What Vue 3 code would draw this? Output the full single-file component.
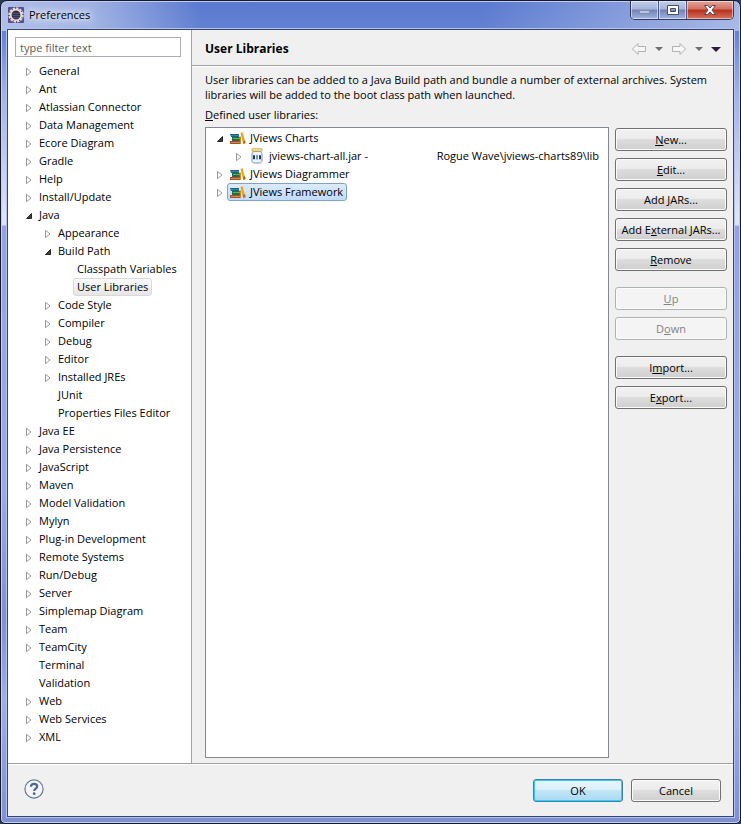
<script setup>
import { ref } from 'vue'

const filter = ref('')

const categories = [
  { name: 'General', level: 0, state: 'closed' },
  { name: 'Ant', level: 0, state: 'closed' },
  { name: 'Atlassian Connector', level: 0, state: 'closed' },
  { name: 'Data Management', level: 0, state: 'closed' },
  { name: 'Ecore Diagram', level: 0, state: 'closed' },
  { name: 'Gradle', level: 0, state: 'closed' },
  { name: 'Help', level: 0, state: 'closed' },
  { name: 'Install/Update', level: 0, state: 'closed' },
  { name: 'Java', level: 0, state: 'open' },
  { name: 'Appearance', level: 1, state: 'closed' },
  { name: 'Build Path', level: 1, state: 'open' },
  { name: 'Classpath Variables', level: 2, state: 'leaf' },
  { name: 'User Libraries', level: 2, state: 'leaf', selected: true },
  { name: 'Code Style', level: 1, state: 'closed' },
  { name: 'Compiler', level: 1, state: 'closed' },
  { name: 'Debug', level: 1, state: 'closed' },
  { name: 'Editor', level: 1, state: 'closed' },
  { name: 'Installed JREs', level: 1, state: 'closed' },
  { name: 'JUnit', level: 1, state: 'leaf' },
  { name: 'Properties Files Editor', level: 1, state: 'leaf' },
  { name: 'Java EE', level: 0, state: 'closed' },
  { name: 'Java Persistence', level: 0, state: 'closed' },
  { name: 'JavaScript', level: 0, state: 'closed' },
  { name: 'Maven', level: 0, state: 'closed' },
  { name: 'Model Validation', level: 0, state: 'closed' },
  { name: 'Mylyn', level: 0, state: 'closed' },
  { name: 'Plug-in Development', level: 0, state: 'closed' },
  { name: 'Remote Systems', level: 0, state: 'closed' },
  { name: 'Run/Debug', level: 0, state: 'closed' },
  { name: 'Server', level: 0, state: 'closed' },
  { name: 'Simplemap Diagram', level: 0, state: 'closed' },
  { name: 'Team', level: 0, state: 'closed' },
  { name: 'TeamCity', level: 0, state: 'closed' },
  { name: 'Terminal', level: 0, state: 'leaf' },
  { name: 'Validation', level: 0, state: 'leaf' },
  { name: 'Web', level: 0, state: 'closed' },
  { name: 'Web Services', level: 0, state: 'closed' },
  { name: 'XML', level: 0, state: 'closed' },
]

const libraries = [
  { name: 'JViews Charts', level: 0, state: 'open', icon: 'books' },
  { name: 'jviews-chart-all.jar -', path: 'Rogue Wave\\jviews-charts89\\lib', level: 1, state: 'closed', icon: 'jar' },
  { name: 'JViews Diagrammer', level: 0, state: 'closed', icon: 'books' },
  { name: 'JViews Framework', level: 0, state: 'closed', icon: 'books', selected: true },
]

// Each label is split around its mnemonic letter.
const actionGroups = [
  [
    ['', 'N', 'ew...'],
    ['', 'E', 'dit...'],
    ['Add ', 'J', 'ARs...'],
    ['Add E', 'x', 'ternal JARs...'],
    ['', 'R', 'emove'],
  ],
  [
    ['', 'U', 'p', true],
    ['D', 'o', 'wn', true],
  ],
  [
    ['I', 'm', 'port...'],
    ['E', 'x', 'port...'],
  ],
]
</script>

<template>
  <div class="window">
    <header class="titlebar">
      <svg class="app-icon" viewBox="0 0 16 16" aria-hidden="true">
        <rect width="16" height="16" rx="1" fill="#5a4c8c" />
        <circle cx="8" cy="8" r="6.6" fill="none" stroke="#dedbd4" stroke-width="2.2" stroke-dasharray="2.3 1.15" />
        <circle cx="8" cy="8" r="5.3" fill="#352e4c" stroke="#e6e3dd" stroke-width="1.7" />
        <path d="M4.5 6.5h7M4.2 8.5h7.6M5 10.5h6" stroke="#574f70" stroke-width="1" />
      </svg>
      <h1 class="title">Preferences</h1>
      <div class="caption">
        <button class="cap" type="button" aria-label="Minimize">
          <svg viewBox="0 0 14 12"><rect x="1.5" y="6.5" width="10" height="3" fill="#b9c4de" stroke="#8290b4" /></svg>
        </button>
        <button class="cap" type="button" aria-label="Maximize">
          <svg viewBox="0 0 14 12"><path d="M1.5 1.5h11v9h-11zM4.5 4.5v3h5v-3z" fill="#fff" fill-rule="evenodd" stroke="#46506e" /></svg>
        </button>
        <button class="cap close" type="button" aria-label="Close">
          <svg viewBox="0 0 14 12"><path d="M1.5 1.5h3.2L7 4l2.3-2.5h3.2L9 6l3.5 4.5H9.3L7 8l-2.3 2.5H1.5L5 6z" fill="#fff" stroke="#5a4450" /></svg>
        </button>
      </div>
    </header>

    <div class="client">
      <div class="content">
        <nav class="sidebar">
          <input v-model="filter" class="filter" type="text" placeholder="type filter text" aria-label="Filter preferences" />
          <ul class="tree">
            <li v-for="item in categories" :key="item.name" class="row" :class="'level-' + item.level">
              <span class="twisty">
                <svg v-if="item.state === 'closed'" viewBox="0 0 8 10"><path d="M1.5 1.3v7.4L6 5z" fill="#fff" stroke="#989898" /></svg>
                <svg v-else-if="item.state === 'open'" viewBox="0 0 8 10"><path d="M6.5 2.5v5h-5z" fill="#404040" stroke="#262626" stroke-linejoin="round" /></svg>
              </span>
              <span class="label" :class="{ current: item.selected }">{{ item.name }}</span>
            </li>
          </ul>
        </nav>

        <main class="page">
          <div class="page-head">
            <h2 class="page-title">User Libraries</h2>
            <div class="history">
              <button class="tool" type="button" aria-label="Back" disabled>
                <svg width="16" height="14" viewBox="0 0 16 14"><path d="M1.5 7l5.5-5.5v3h7.500v5H7v3z" fill="#f7f7f7" stroke="#b0b0b0" stroke-linejoin="round" /></svg>
              </button>
              <button class="tool" type="button" aria-label="Back history">
                <svg width="8" height="14" viewBox="0 0 8 14"><path d="M0 5h8L4 9z" fill="#6e6e6e" /></svg>
              </button>
              <button class="tool" type="button" aria-label="Forward" disabled>
                <svg width="16" height="14" viewBox="0 0 16 14"><path d="M14.5 7L9 1.500v3H1.500v5H9v3z" fill="#f7f7f7" stroke="#b0b0b0" stroke-linejoin="round" /></svg>
              </button>
              <button class="tool" type="button" aria-label="Forward history">
                <svg width="8" height="14" viewBox="0 0 8 14"><path d="M0 5h8L4 9z" fill="#6e6e6e" /></svg>
              </button>
              <button class="tool" type="button" aria-label="View menu">
                <svg width="10" height="14" viewBox="0 0 10 14"><path d="M0 5h10L5 10z" fill="#2c1a40" /></svg>
              </button>
            </div>
          </div>

          <div class="page-body">
            <p class="intro">User libraries can be added to a Java Build path and bundle a number of external archives. System libraries will be added to the boot class path when launched.</p>
            <p id="defined-label" class="list-label"><u>D</u>efined user libraries:</p>
            <div class="columns">
              <ul class="library-list" aria-labelledby="defined-label">
                <li v-for="lib in libraries" :key="lib.name" class="row" :class="'level-' + lib.level">
                  <span class="twisty">
                    <svg v-if="lib.state === 'closed'" viewBox="0 0 8 10"><path d="M1.5 1.3v7.4L6 5z" fill="#fff" stroke="#989898" /></svg>
                    <svg v-else viewBox="0 0 8 10"><path d="M6.5 2.5v5h-5z" fill="#404040" stroke="#262626" stroke-linejoin="round" /></svg>
                  </span>
                  <span class="library" :class="{ picked: lib.selected }">
                    <svg v-if="lib.icon === 'books'" class="lib-icon" viewBox="0 0 16 16" aria-hidden="true">
                      <path d="M0 4h9v3H1z" fill="#1b6488" /><path d="M1 5h8v1H1z" fill="#2f86a4" />
                      <path d="M2 7h8v4H2z" fill="#1c7048" /><path d="M3 8h7v1H3z" fill="#58ad7c" />
                      <path d="M0 11h11v3H0z" fill="#a9502a" /><path d="M1 12h9v1H1z" fill="#d98255" />
                      <path d="M9.500 6.500h1.500V14H10z" fill="#d98a14" />
                      <path d="M10.500 3l2-1L15.500 13l-2.200 1z" fill="#eda41d" />
                      <path d="M12.800 11l2.200-.8.600 2.800-2.200 1z" fill="#b56f10" />
                    </svg>
                    <svg v-else class="lib-icon" viewBox="0 0 16 16" aria-hidden="true">
                      <path d="M4.500 3.500h7l1.500 2v8l-1.500 1.500h-7L3 13.500v-8z" fill="#eef3fa" stroke="#7893b8" />
                      <path d="M3 .8h10v2.400H3z" fill="#fbe8a8" stroke="#c8a040" stroke-width=".8" />
                      <path d="M4.500 7.500h1v3.500h-1zM8 7v4.500M10.500 7.500h1v3.500h-1z" fill="#fff" stroke="#1f3864" />
                    </svg>
                    <span>{{ lib.name }}</span>
                  </span>
                  <span v-if="lib.path" class="path">{{ lib.path }}</span>
                </li>
              </ul>
              <div class="actions">
                <div v-for="(group, index) in actionGroups" :key="index" class="group">
                  <button v-for="a in group" :key="a.join('')" class="btn" type="button" :disabled="a[3]">{{ a[0] }}<u>{{ a[1] }}</u>{{ a[2] }}</button>
                </div>
              </div>
            </div>
          </div>
        </main>
      </div>

      <footer class="footer">
        <button class="help" type="button" aria-label="Help">
          <svg viewBox="0 0 22 22"><circle cx="11" cy="11" r="10" fill="#f3f5f8" stroke="#64779a" stroke-width="1.3" /><path d="M7.600 8.400C7.600 6.300 9 5.300 11 5.300s3.500 1.100 3.500 2.900c0 2.400-3.300 2.500-3.300 5.100" fill="none" stroke="#50668f" stroke-width="2.400" /><circle cx="11.200" cy="16.200" r="1.500" fill="#50668f" /></svg>
        </button>
        <div class="decision">
          <button class="btn default" type="button">OK</button>
          <button class="btn" type="button">Cancel</button>
        </div>
      </footer>
    </div>
  </div>
</template>

<style>
body {
  margin: 0;
  background: #2b3a55;
}
</style>

<style scoped>
.window,
.window * {
  box-sizing: border-box;
}
.window {
  display: flex;
  flex-direction: column;
  min-height: 100vh;
  padding: 0 6px 6px;
  border: 1px solid #16182c;
  border-radius: 7px 7px 5px 5px;
  box-shadow: inset 0 0 0 1px #c3cdf2;
  background:
    linear-gradient(90deg, rgba(255, 255, 255, 0.5) 0, rgba(255, 255, 255, 0.42) 90px, rgba(255, 255, 255, 0) 200px, rgba(255, 255, 255, 0) 480px, rgba(255, 255, 255, 0.45) 100%) top / 100% 30px no-repeat,
    linear-gradient(#5a79d0 0, #6482d2 30px, #9fb2e6 90px, #dde3f8 215px, #dde3f8 224px, #96a3e2 225px, #9ba9e6 60%, #8090d2 75%, #a0aee8 85%, #7f90d2 100%);
  color: #000;
  font: 11px/18px "Open Sans", "Noto Sans", sans-serif;
}
.window button,
.window input {
  font: inherit;
}
.titlebar {
  display: flex;
  align-items: flex-start;
  height: 28px;
}
.app-icon {
  width: 16px;
  height: 16px;
  margin: 6px 0 0 1px;
}
.title {
  margin: 5px auto 0 5px;
  font: inherit;
  text-shadow: 0 0 6px #fff, 0 0 10px #fff, 0 0 12px #fff;
}
.caption {
  display: flex;
  height: 19px;
  border: 1px solid #2f3a60;
  border-top: 0;
  border-radius: 0 0 5px 5px;
  overflow: hidden;
}
.cap {
  display: flex;
  align-items: center;
  justify-content: center;
  width: 28px;
  padding: 0;
  border: 0;
  border-right: 1px solid #4b588a;
  box-shadow: inset 0 0 0 1px rgba(255, 255, 255, 0.5);
  background: linear-gradient(#c2cdea, #a6b3da 45%, #7081b4 50%, #a3b4e2);
}
.cap svg {
  width: 14px;
  height: 12px;
}
.cap.close {
  width: 46px;
  border-right: 0;
  background: linear-gradient(#e6a49a, #d2705f 45%, #b5301d 50%, #d8735c);
}
.client {
  display: flex;
  flex: 1;
  flex-direction: column;
  border: 1px solid #39466b;
  outline: 1px solid #b4c1ee;
  background: #f0f0f0;
}
.content {
  display: flex;
  flex: 1;
  border-bottom: 1px solid #a0a0a0;
}
.sidebar {
  flex: none;
  width: 184px;
  padding: 7px 10px 7px 7px;
  border-right: 1px solid #a0a0a0;
  background: #fff;
}
.filter {
  display: block;
  width: 100%;
  height: 20px;
  padding: 0 4px;
  border: 1px solid #abadb3;
  background: #fff;
}
.filter::placeholder {
  color: #5c5c5c;
  opacity: 1;
}
.tree,
.library-list {
  margin: 0;
  padding: 0;
  list-style: none;
}
.tree {
  padding: 5px 0 0 8px;
}
.row {
  display: flex;
  height: 18px;
  white-space: nowrap;
}
.row.level-1 {
  padding-left: 19px;
}
.row.level-2 {
  padding-left: 38px;
}
.twisty {
  display: flex;
  align-items: center;
  width: 12px;
  padding: 2px 0 0 1px;
}
.tree .twisty {
  padding-left: 2px;
}
.twisty svg {
  width: 8px;
  height: 10px;
}
.label {
  padding: 0 3px;
  border: 1px solid transparent;
  border-radius: 3px;
  line-height: 16px;
}
.label.current {
  border-color: #d9d9d9;
  background: linear-gradient(#fafafa, #e6e6e6);
}
.page {
  display: flex;
  flex: 1;
  flex-direction: column;
  min-width: 0;
}
.page-head {
  display: flex;
  align-items: center;
  justify-content: space-between;
  height: 36px;
  padding: 2px 12px 0 13px;
  border-bottom: 1px solid #a0a0a0;
  box-shadow: 0 1px #fff;
}
.page-title {
  margin: 0;
  font-size: 12px;
  font-weight: 700;
}
.history {
  display: flex;
  gap: 8px;
}
.tool {
  display: flex;
  padding: 0;
  border: 0;
  background: none;
}
.page-body {
  display: flex;
  flex: 1;
  flex-direction: column;
  padding: 6px 6px 5px 13px;
}
.intro {
  margin: 0;
  line-height: 15px;
}
.list-label {
  margin: 4px 0 3px;
}
u {
  text-underline-offset: 1px;
}
.columns {
  display: flex;
  flex: 1;
  gap: 6px;
}
.library-list {
  flex: 1;
  padding: 1px 9px;
  border: 1px solid #828790;
  background: #fff;
}
.library {
  display: flex;
  gap: 4px;
  align-items: center;
  padding: 0 3px 0 2px;
  border: 1px solid transparent;
  border-radius: 3px;
}
.library.picked {
  border-color: #7da2ce;
  background: linear-gradient(#dcebfc, #c1dbfc);
}
.lib-icon {
  width: 16px;
  height: 16px;
}
.path {
  margin-left: auto;
}
.actions {
  display: flex;
  flex-direction: column;
  gap: 16px;
  width: 112px;
  padding-top: 1px;
}
.group {
  display: flex;
  flex-direction: column;
  gap: 7px;
}
.btn {
  height: 23px;
  padding: 0;
  border: 1px solid #707070;
  border-radius: 3px;
  box-shadow: inset 0 0 0 1px #fbfbfb;
  background: linear-gradient(#f2f2f2, #ebebeb 49%, #dddddd 50%, #cfcfcf);
  color: #000;
  white-space: nowrap;
}
.btn:disabled {
  border-color: #adb2b5;
  background: #f4f4f4;
  color: #838383;
}
.btn.default {
  border-color: #3c7fb1;
  box-shadow: inset 0 0 0 1px #33cdf8;
  background: linear-gradient(#eaf6fd, #d9f0fc 49%, #c2e6f8 50%, #a9d9f2);
}
.footer {
  display: flex;
  align-items: flex-start;
  justify-content: space-between;
  height: 52px;
  padding: 14px 12px 0 16px;
  border-top: 1px solid #fff;
}
.help {
  width: 20px;
  height: 20px;
  padding: 0;
  border: 0;
  background: none;
}
.help svg {
  display: block;
}
.decision {
  display: flex;
  gap: 8px;
}
.decision .btn {
  width: 90px;
}
</style>
